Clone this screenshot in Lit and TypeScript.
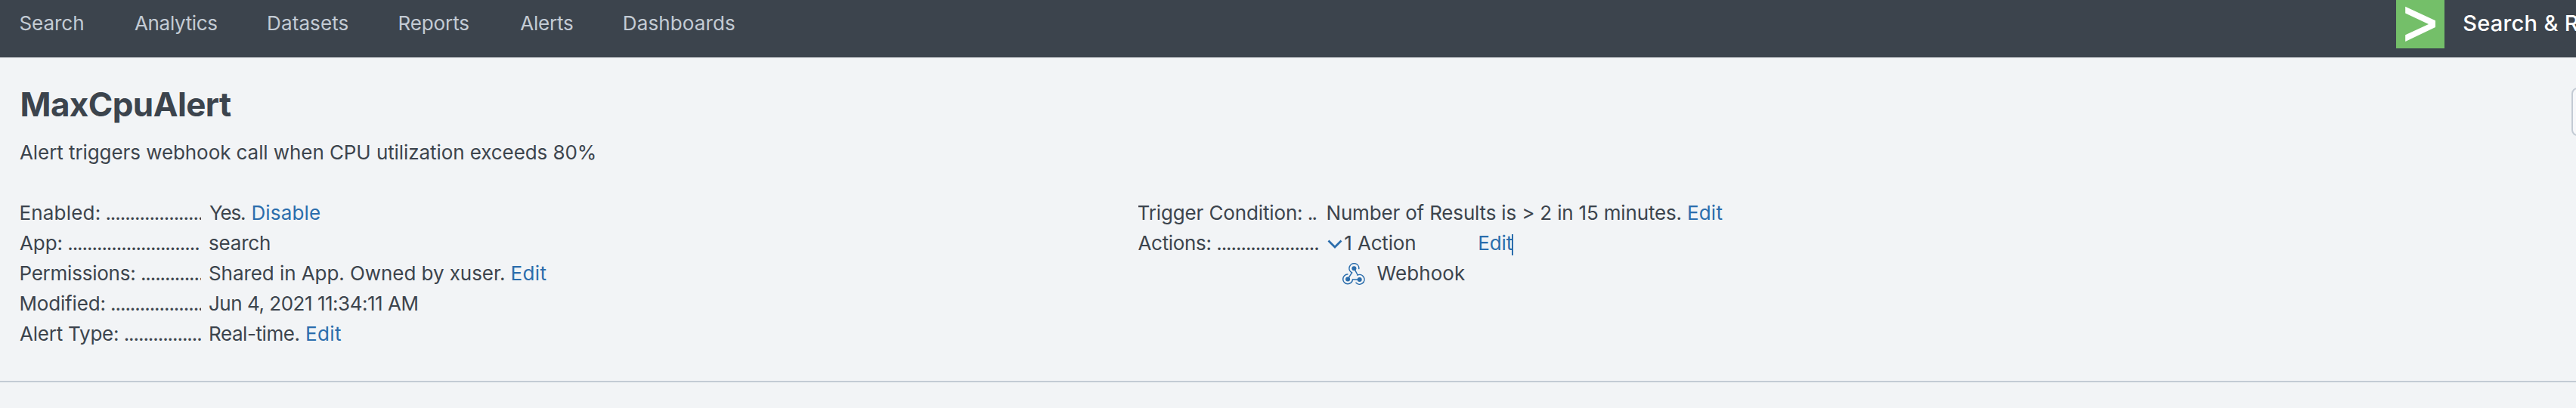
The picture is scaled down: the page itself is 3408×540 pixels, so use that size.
import { LitElement, html, css, svg } from "lit";
import { customElement } from "lit/decorators.js";

const pen = document.createElement("canvas").getContext("2d")!;

/** Text whose letters are tracked so that it fills exactly `w` pixels. */
const fit = (text: string, w: number, cls = "", size = 26, weight = 400) => {
  pen.font = `${weight} ${size}px Inter`;
  pen.fontKerning = "normal";
  const m = pen.measureText(text);
  const ink = m.actualBoundingBoxLeft + m.actualBoundingBoxRight;
  const ls = (w - ink) / (text.length - 1);
  return html`<span class="fit ${cls}" style="width:${w}px;letter-spacing:${ls.toFixed(3)}px;text-indent:${m.actualBoundingBoxLeft.toFixed(2)}px">${text}</span>`;
};

const leader = (n: number) => fit(".".repeat(n), (n - 1) * 6.49 + 3.2, "dots");

const row = (label: string, lw: number, dots: number, value: unknown, cls = "") => html`
  <div class="row">
    <div class="label ${cls}">${fit(label, lw)}${leader(dots)}</div>
    <div class="value">${value}</div>
  </div>`;

const chevron = svg`<svg class="chevron" viewBox="0 0 20 12"><path d="M1.5 1.5 10 10 18.5 1.5" /></svg>`;

const webhook = svg`<svg class="hook" viewBox="0 0 30 30">
  <g class="nodes"><circle cx="15.4" cy="7.2" r="3"/><circle cx="7.1" cy="21.5" r="3"/><circle cx="22.7" cy="21.9" r="3"/></g>
  <path class="arm" d="M7.1 21.5 12.7 12.6M15.4 7.2 20.2 16M22.7 21.9H13.4"/>
  <path class="ring" d="M12.7 12.9A6.4 6.4 0 1 1 21.8 7.6M6.9 15A6.4 6.4 0 1 0 13.5 21.9M19.9 16.1A6.4 6.4 0 1 1 18 26.3"/>
</svg>`;

@customElement("app-root")
export class AppRoot extends LitElement {
  static styles = css`
    :host { display: block; width: 100%; height: 540px; overflow: hidden; background: #f2f4f6; color: #3c444d;
      font: 26px/40px Inter, "Open Sans", sans-serif; }
    * { box-sizing: border-box; }
    .fit { display: block; flex: none; white-space: nowrap; font-kerning: normal; font-variant-ligatures: none; }
    header { display: flex; justify-content: space-between; height: 76px; background: #3c444d; color: #c3cbd4; }
    nav { display: flex; gap: 67.8px; padding: 11px 0 0 26.4px; }
    .brand { display: flex; width: 238px; overflow: hidden; color: #fff; }
    .logo { width: 64px; height: 64px; flex: none; margin-right: 25.2px; }
    .title { font-size: 29px; padding-top: 11px; font-weight: 500; }
    .head { display: flex; justify-content: space-between; height: 104px; padding-top: 40px; overflow: hidden; }
    .name { margin: 0 0 0 28.5px; padding-top: 1px; font-size: 44px; line-height: 42px; font-weight: 700; }
    .button { width: 130px; height: 64px; flex: none; margin-right: -124px; border: 2px solid #c3cbd4; border-radius: 8px; background: #f7f8fa; }
    .desc { padding: 2px 0 0 26px; height: 80px; }
    .info { display: grid; grid-template-columns: 1479.5px 1fr; height: 246px; padding: 2px 0 0 26px; border-bottom: 2px solid #c3cbd4; }
    .row { display: flex; height: 40px; }
    .label { display: flex; gap: 9.7px; width: 240px; margin-right: 11px; overflow: hidden; flex: none; }
    .cap { padding-left: 1.4px; }
    .value { display: flex; gap: 10.4px; }
    a { color: #2b6dac; text-decoration: none; }
    .in1 { margin-left: 1px; }
    .chevron { width: 20px; height: 12px; margin: 15px -6.6px 0 -1px; fill: none; stroke: #2b6dac; stroke-width: 2.7; }
    .caret { width: 44.5px; height: 28px; margin: 8px 0 0 74.6px; line-height: 24px; border-right: 2px solid #2b6dac; }
    .action { display: flex; align-items: flex-start; gap: 15.5px; padding-left: 270.5px; }
    .hook { width: 30px; height: 30px; margin-top: 5.5px; }
    .nodes { fill: #2b6dac; }
    .arm { fill: none; stroke: #2b6dac; stroke-width: 1.5; }
    .ring { fill: none; stroke: #2b6dac; stroke-width: 1.5; stroke-linecap: round; }
  `;

  render() {
    const nav: [string, number][] = [["Search", 83.8], ["Analytics", 109.3], ["Datasets", 105.5], ["Reports", 92], ["Alerts", 69.8], ["Dashboards", 146.3]];
    return html`
      <header>
        <nav>${nav.map(([t, w]) => fit(t, w))}</nav>
        <div class="brand">
          <svg class="logo" viewBox="0 0 64 64"><rect width="64" height="64" fill="#74bf69"/><path fill="#fff" d="M12.2 8.7 52 27.2V36L12.2 55V46.3L43 32 12.2 17.4Z"/></svg>
          ${fit("Search & R", 151.5, "title", 29, 500)}
        </div>
      </header>
      <section class="head">
        <h1 class="name">${fit("MaxCpuAlert", 277.5, "", 44, 700)}</h1>
        <div class="button"></div>
      </section>
      <div class="desc">${fit("Alert triggers webhook call when CPU utilization exceeds 80%", 760.8)}</div>
      <section class="info">
        <div>
          ${row("Enabled:", 104.3, 20, html`${fit("Yes.", 47)}<a>${fit("Disable", 88.7)}</a>`, "cap")}
          ${row("App:", 55.5, 27, fit("search", 80))}
          ${row("Permissions:", 150.8, 13, html`${fit("Shared in App. Owned by xuser.", 390)}<a>${fit("Edit", 45)}</a>`, "cap")}
          ${row("Modified:", 111, 19, fit("Jun 4, 2021 11:34:11 AM", 275.5), "cap")}
          ${row("Alert Type:", 130, 16, html`${fit("Real-time.", 117.5, "in1")}<a>${fit("Edit", 45)}</a>`)}
        </div>
        <div>
          ${row("Trigger Condition:", 216.6, 2, html`${fit("Number of Results is > 2 in 15 minutes.", 467)}<a>${fit("Edit", 44.5)}</a>`)}
          ${row("Actions:", 96, 21, html`${chevron}${fit("1 Action", 93)}<a class="caret">${fit("Edit", 43.5)}</a>`)}
          <div class="action">${webhook}${fit("Webhook", 116.5)}</div>
        </div>
      </section>`;
  }
}
